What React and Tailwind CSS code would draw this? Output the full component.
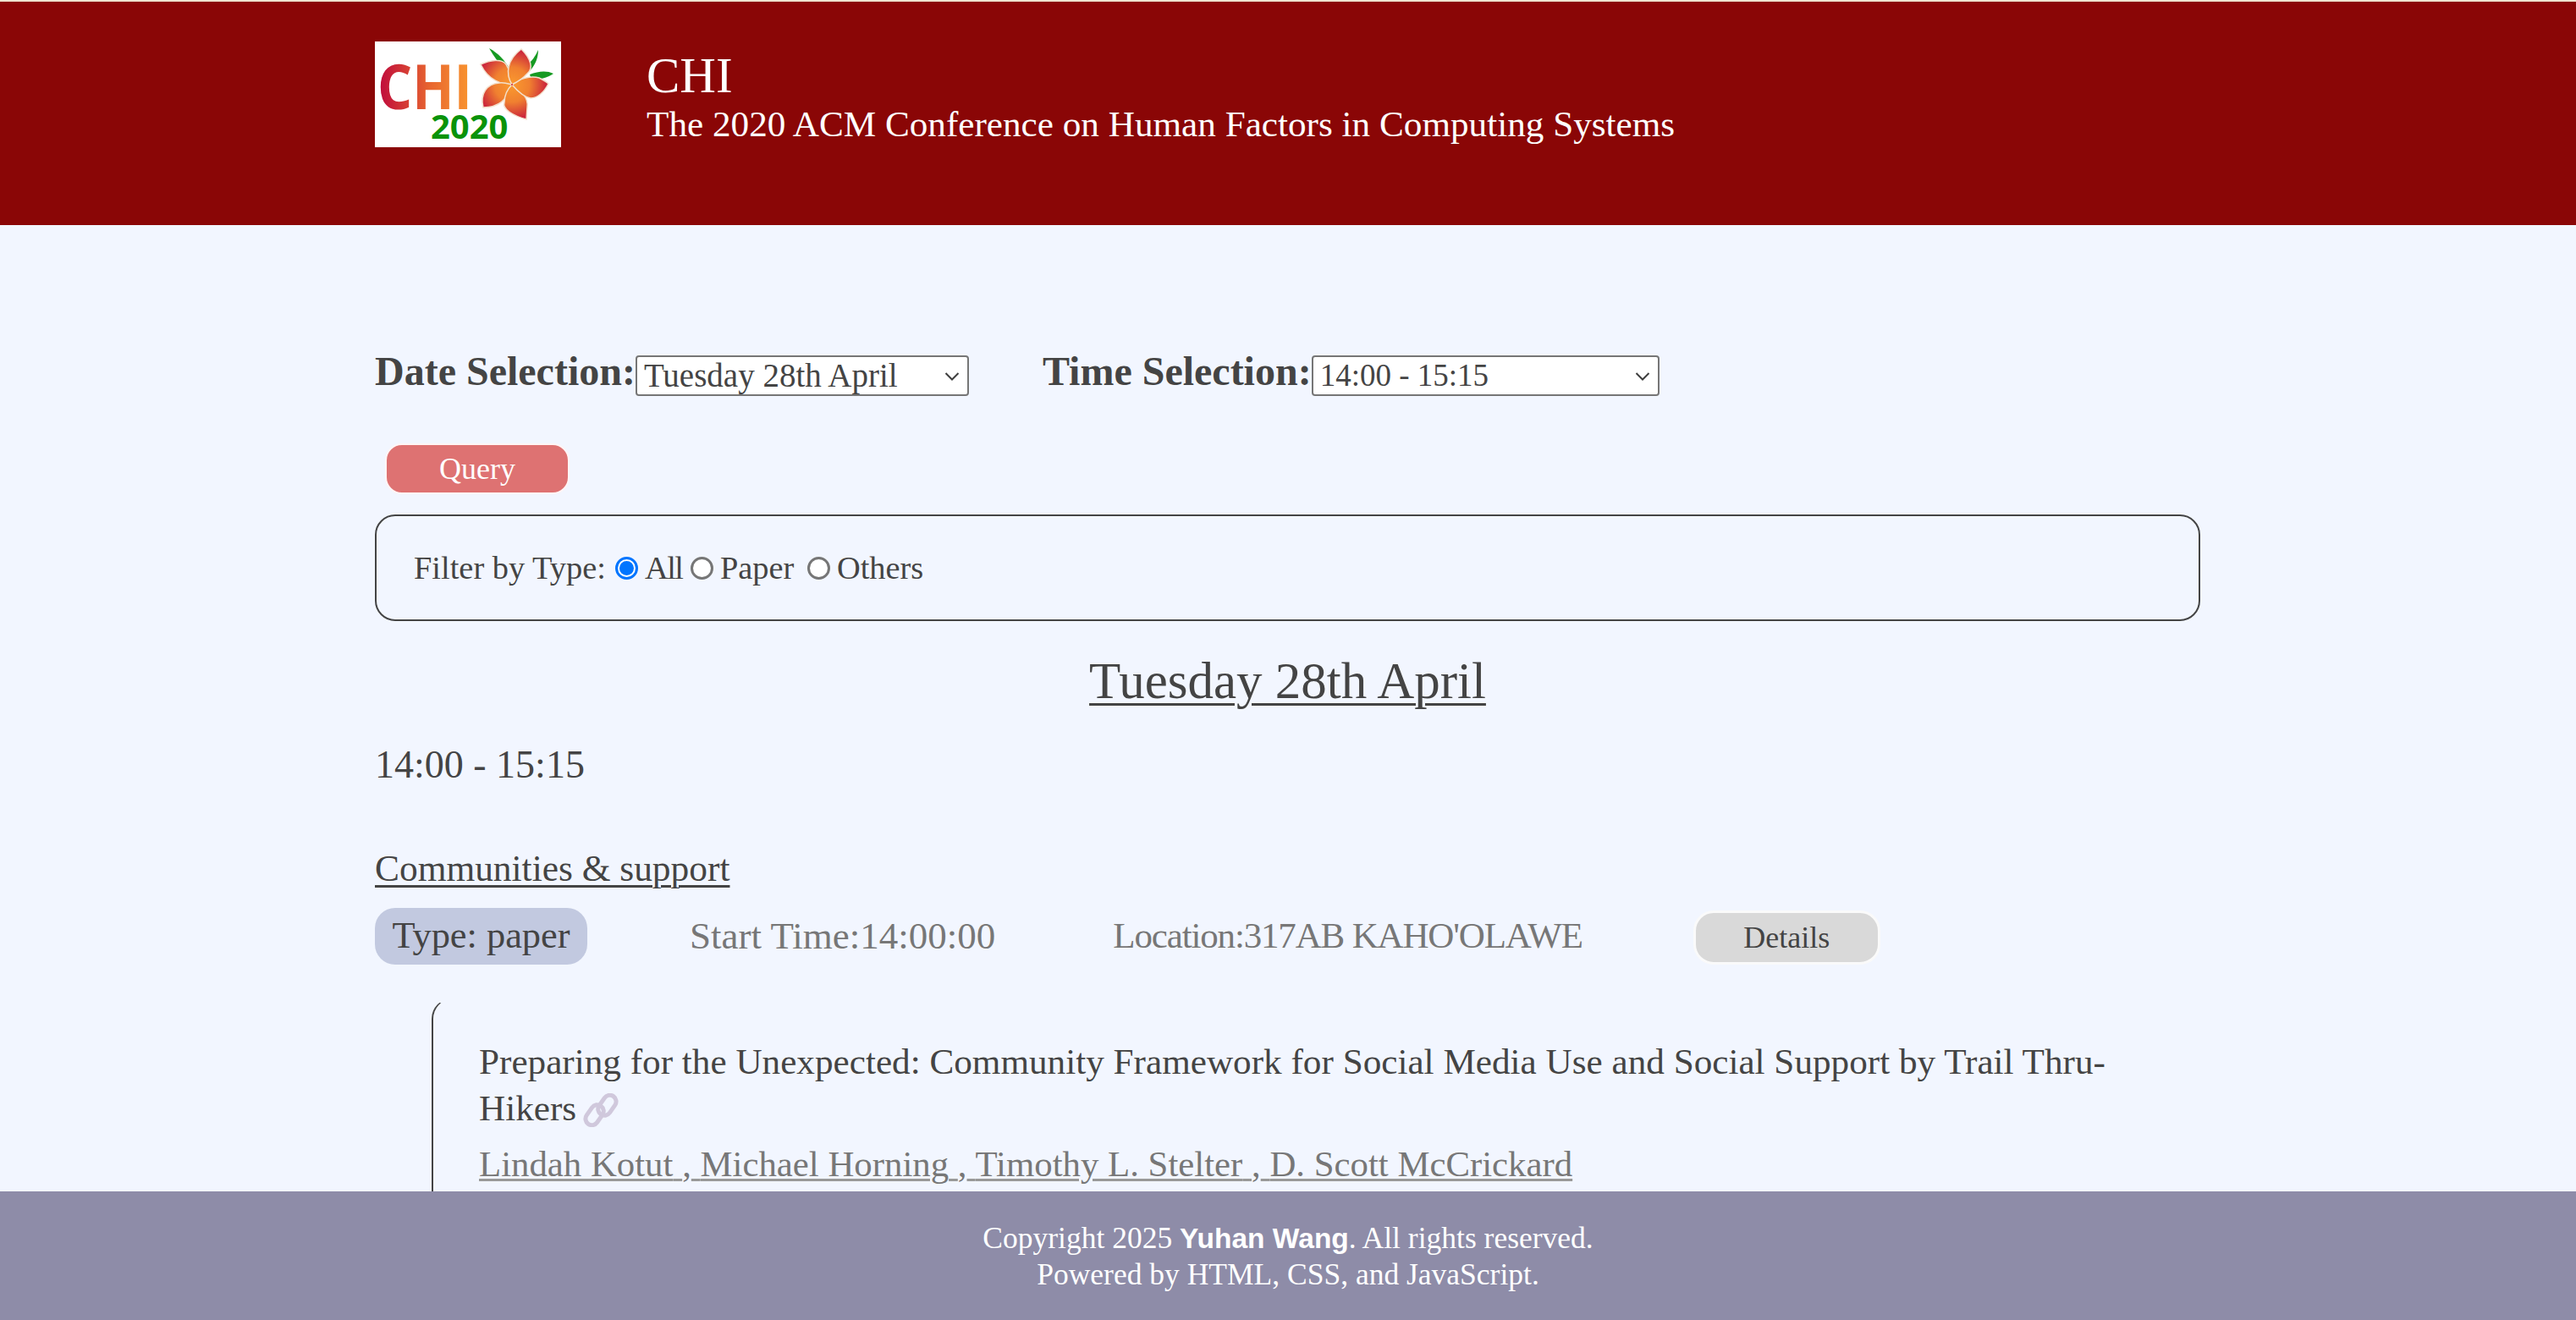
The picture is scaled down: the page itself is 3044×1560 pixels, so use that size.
import React from 'react';

const serif = 'font-["Liberation_Serif",serif]';

const ChiLogo = () => (
  <svg width="220" height="125" viewBox="0 0 220 125" overflow="visible" className="block bg-white">
    <defs>
      <linearGradient id="chiText" x1="6" x2="114" y1="0" y2="0" gradientUnits="userSpaceOnUse">
        <stop offset="0" stopColor="#c00d3c" />
        <stop offset="0.55" stopColor="#e8662f" />
        <stop offset="1" stopColor="#f9962f" />
      </linearGradient>
      <radialGradient id="petal" cx="162" cy="51" r="46" gradientUnits="userSpaceOnUse">
        <stop offset="0" stopColor="#fa9a2e" />
        <stop offset="0.45" stopColor="#f08030" />
        <stop offset="1" stopColor="#c20f3e" />
      </radialGradient>
    </defs>
    <path d="M135 8C146 14 153 22 159 32L154 34C147 26 140 17 135 8Z" fill="#169a22" />
    <path d="M193 10C193 19 190 27 183 35L178 30C185 24 190 17 193 10Z" fill="#169a22" />
    <path d="M211 38C203 34 193 35 183 39L185 45C194 45 204 43 211 38Z" fill="#169a22" />
    <g fill="url(#petal)" stroke="#f3e0cc" strokeWidth="1.5">
      <path d="M162 51C150 51 134 46 125 27C136 22 150 20 155 27C159 33 161 42 162 51Z" />
      <path d="M162 51C158 66 148 78 128 78C124 62 132 50 147 49C152 48 158 50 162 51Z" />
      <path d="M162 51C172 58 182 66 180 78L179 92C164 88 150 80 153 72C153 64 157 56 162 51Z" />
      <path d="M162 51C170 44 184 40 194 43C198 45 202 47 205 50C200 60 192 67 184 67C176 66 168 58 162 51Z" />
      <path d="M162 51C154 38 156 22 173 9C184 20 188 32 180 38C175 44 168 48 162 51Z" />
    </g>
    <circle cx="162" cy="51" r="1" fill="#d0203a" />
    <text x="3" y="80" fontFamily="'Open Sans', sans-serif" fontWeight="700" fontSize="74" textLength="112" lengthAdjust="spacingAndGlyphs" fill="url(#chiText)">CHI</text>
    <text x="66" y="115" fontFamily="'Open Sans', sans-serif" fontWeight="700" fontSize="40" fill="#0a930a">2020</text>
  </svg>
);

const Chevron = () => (
  <svg width="18" height="10" viewBox="0 0 18 10" className="absolute right-[11px] top-[20px] pointer-events-none">
    <path d="M1.5 1L9 8.5L16.5 1" fill="none" stroke="#3d3d3d" strokeWidth="2" />
  </svg>
);

const ChainIcon = () => (
  <svg width="44" height="40" viewBox="0 0 44 40" className="inline-block align-[-8px] ml-[8px]">
    <g fill="none" stroke="#d0c8dc" strokeWidth="5" strokeLinecap="round">
      <rect x="21" y="1" width="15" height="26" rx="7.5" transform="rotate(35 28 14)" />
      <rect x="6" y="13" width="15" height="26" rx="7.5" transform="rotate(35 14 26)" />
    </g>
  </svg>
);

const Radio = ({ checked, label, labelClass }) => (
  <label className="flex items-center">
    <span
      className={
        checked
          ? 'w-[27px] h-[27px] rounded-full border-[3px] border-[#0075ff] flex items-center justify-center bg-white'
          : 'w-[27px] h-[27px] rounded-full border-[3px] border-[#767676] bg-white'
      }
    >
      {checked && <span className="w-[17px] h-[17px] rounded-full bg-[#0075ff]" />}
    </span>
    <span className={`ml-[8px] ${labelClass}`}>{label}</span>
  </label>
);

const App = () => {
  const authors = ['Lindah Kotut', 'Michael Horning', 'Timothy L. Stelter', 'D. Scott McCrickard'];

  return (
    <div className={`h-screen flex flex-col overflow-hidden bg-[#f2f6ff] text-[#444444] ${serif}`}>
      {/* Header */}
      <header className="h-[266px] shrink-0 border-t-2 border-[#efe3cf] bg-[#8a0606] text-white flex items-start pl-[443px]">
        <div className="mt-[47px]">
          <ChiLogo />
        </div>
        <div className="ml-[101px] mt-[55px]">
          <h1 className="text-[59px] leading-[64px]">CHI</h1>
          <p className="text-[43.2px] leading-[52px]">The 2020 ACM Conference on Human Factors in Computing Systems</p>
        </div>
      </header>

      <main className="flex-1 min-h-0 overflow-hidden">
        <div className="w-[2157px] ml-[443px]">
          {/* Date and time */}
          <div className="flex items-start pt-[154px]">
            <span className="text-[48px] leading-[38px] font-bold">Date Selection:</span>
            <div className="relative">
              <select className="appearance-none w-[394px] h-[48px] pl-[8px] bg-white border-2 border-[#767676] rounded-[4px] text-[39px] leading-[44px] text-[#444444]">
                <option>Tuesday 28th April</option>
              </select>
              <Chevron />
            </div>
            <span className="ml-[87px] text-[48px] leading-[38px] font-bold">Time Selection:</span>
            <div className="relative">
              <select className="appearance-none w-[411px] h-[48px] pl-[8px] bg-white border-2 border-[#767676] rounded-[4px] text-[37px] leading-[44px] text-[#444444]">
                <option>14:00 - 15:15</option>
              </select>
              <Chevron />
            </div>
          </div>

          <button className="block mt-[56px] ml-[12px] w-[218px] h-[60px] rounded-[20px] border-2 border-[#fff5f5] bg-[#de7272] text-white text-[36px]">
            Query
          </button>

          {/* Filter */}
          <div className="mt-[24px] h-[126px] border-2 border-[#444444] rounded-[24px] pl-[44px] pt-[2px] flex items-center text-[38.4px]">
            <span className="mr-[11px]">Filter by Type:</span>
            <Radio checked label="All" labelClass="w-[54px] tracking-[-1.5px]" />
            <Radio label="Paper" labelClass="w-[103px]" />
            <Radio label="Others" labelClass="w-[110px]" />
          </div>

          <h2 className="mt-[35px] text-center text-[61px] leading-[72px] underline decoration-[3px] underline-offset-[6px]">Tuesday 28th April</h2>

          <p className="mt-[35px] text-[46px] leading-[56px]">14:00 - 15:15</p>

          <h3 className="mt-[69px] text-[43.4px] leading-[50px] underline decoration-[3px] underline-offset-[5px]">Communities &amp; support</h3>

          {/* Session row */}
          <div className="mt-[22px] flex items-start">
            <span className="w-[251px] h-[67px] pb-[2px] rounded-[24px] bg-[#c2c9e0] flex items-center justify-center text-[44.4px]">Type: paper</span>
            <span className="ml-[121px] leading-[66px] text-[45px] text-[#777777]">Start Time:14:00:00</span>
            <span className="ml-[139px] leading-[66px] text-[43px] tracking-[-1.16px] text-[#777777]">Location:317AB KAHO'OLAWE</span>
            <button className="ml-[131px] mt-[3px] w-[221px] h-[64px] rounded-[24px] border-[3px] border-[#fafafa] bg-[#d9d9d9] text-[36px]">Details</button>
          </div>

          {/* Paper card */}
          <div className="mt-[40px] ml-[67px] w-[2060px] pt-[46px] pb-[80px] pl-[54px] border-l-2 border-t border-t-transparent border-[#444444] rounded-tl-[24px]">
            <p className="text-[43.2px] leading-[55px]">
              Preparing for the Unexpected: Community Framework for Social Media Use and Social Support by Trail Thru-Hikers
              <ChainIcon />
            </p>
            <p className="mt-[11px] text-[42.8px] leading-[55px] text-[#777777]">
              {authors.map((name, i) => (
                <span key={name}>
                  <span className="whitespace-pre underline decoration-[3px] decoration-[#999999] underline-offset-[3px]">
                    {i > 0 ? ' ' : ''}
                    {name}
                    {i < authors.length - 1 ? ' ' : ''}
                  </span>
                  {i < authors.length - 1 ? ',' : ''}
                </span>
              ))}
            </p>
          </div>
        </div>
      </main>

      {/* Footer */}
      <footer className="h-[152px] shrink-0 bg-[#8e8ca8] text-white text-center text-[35.5px] leading-[43px] pt-[34px]">
        <p>
          Copyright 2025 <strong className='font-["Liberation_Sans",sans-serif] text-[33.5px]'>Yuhan Wang</strong>. All rights reserved.
        </p>
        <p>Powered by HTML, CSS, and JavaScript.</p>
      </footer>
    </div>
  );
};

export default App;
